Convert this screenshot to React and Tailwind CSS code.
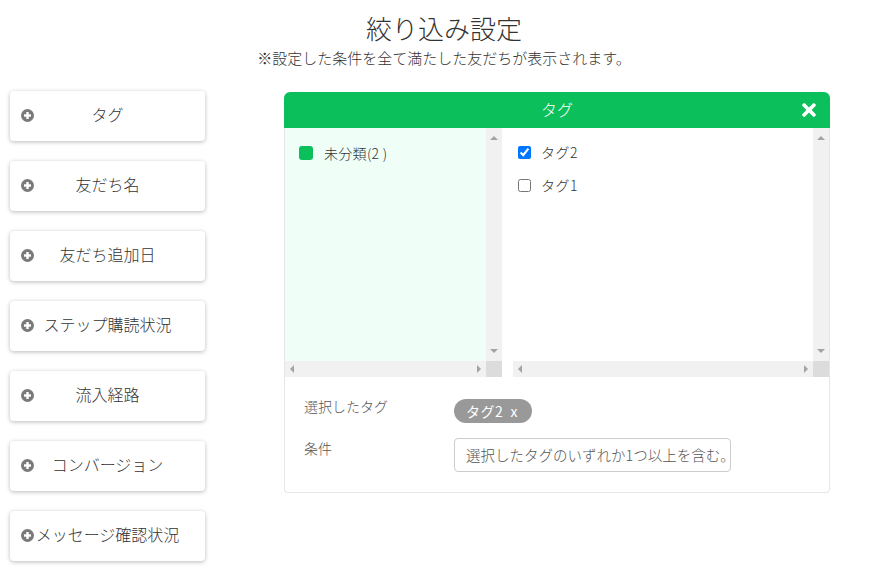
import React from "react";
import { FaTimes } from "react-icons/fa";

const font = { fontFamily: '"Noto Sans CJK JP", "Noto Sans", sans-serif' };

function PlusIcon() {
  return (
    <svg width="13" height="13" viewBox="0 0 13 13">
      <circle cx="6.5" cy="6.5" r="6.5" fill="#7a7a7a" />
      <rect x="3" y="5.3" width="7" height="2.4" fill="#fff" />
      <rect x="5.3" y="3" width="2.4" height="7" fill="#fff" />
    </svg>
  );
}

function SideButton({ label }) {
  return (
    <div className="relative h-[50px] w-[195px] rounded-[4px] bg-white shadow-[0_1px_4px_rgba(0,0,0,0.28)] flex items-center justify-center">
      <span className="absolute left-[11px] top-[18px] flex">
        <PlusIcon />
      </span>
      <span className="text-[16px] leading-[22px] font-light text-[#333] whitespace-nowrap pb-[5px]">{label}</span>
    </div>
  );
}

function UpArrow() {
  return <div className="w-0 h-0 border-l-[4px] border-r-[4px] border-b-[4px] border-l-transparent border-r-transparent border-b-[#a3a3a3]" />;
}
function DownArrow() {
  return <div className="w-0 h-0 border-l-[4px] border-r-[4px] border-t-[4px] border-l-transparent border-r-transparent border-t-[#a3a3a3]" />;
}
function LeftArrow() {
  return <div className="w-0 h-0 border-t-[4px] border-b-[4px] border-r-[4px] border-t-transparent border-b-transparent border-r-[#a3a3a3]" />;
}
function RightArrow() {
  return <div className="w-0 h-0 border-t-[4px] border-b-[4px] border-l-[4px] border-t-transparent border-b-transparent border-l-[#a3a3a3]" />;
}

function VScroll() {
  return (
    <div className="w-[16px] bg-[#f1f1f1] flex flex-col items-center justify-between pt-[8px] pb-[8px]">
      <UpArrow />
      <DownArrow />
    </div>
  );
}

function HScroll() {
  return (
    <div className="h-[16px] flex">
      <div className="flex-1 bg-[#f1f1f1] flex items-center justify-between px-[5px]">
        <LeftArrow />
        <RightArrow />
      </div>
      <div className="w-[16px] bg-[#dcdcdc]" />
    </div>
  );
}

export default function App() {
  const items = ["タグ", "友だち名", "友だち追加日", "ステップ購読状況", "流入経路", "コンバージョン", "メッセージ確認状況"];
  return (
    <div className="w-[888px] h-[572px] bg-white overflow-hidden text-[#333] font-light" style={font}>
      <div className="pt-[8px] flex flex-col items-center">
        <div className="text-[26px] leading-[39px] font-light text-[#333]">絞り込み設定</div>
        <div className="text-[15px] leading-[22px] text-[#333]">※設定した条件を全て満たした友だちが表示されます。</div>
      </div>
      <div className="mt-[22px] flex pl-[10px]">
        <div className="flex flex-col gap-[20px]">
          {items.map((t) => (
            <SideButton key={t} label={t} />
          ))}
        </div>
        <div className="ml-[79px] mt-[1px] w-[546px] self-start">
          <div className="h-[36px] rounded-t-[6px] bg-[#0bbf5a] grid grid-cols-[1fr_auto_1fr] items-center">
            <div />
            <div className="text-white text-[16px] leading-[22px] pb-[3px]">タグ</div>
            <div className="flex justify-end pr-[11px]">
              <FaTimes className="text-white" size={20} />
            </div>
          </div>
          <div className="border border-t-0 border-[#e6e6e6] rounded-b-[4px]">
            <div className="flex gap-[11px]">
              <div className="w-[217px] flex flex-col">
                <div className="h-[233px] flex">
                  <div className="flex-1 bg-[#effff8] pt-[15px] pl-[14px]">
                    <div className="flex items-center h-[20px] gap-[11px]">
                      <div className="w-[14px] h-[14px] rounded-[3px] bg-[#0bbf5a]" />
                      <span className="text-[14px] leading-[20px] tracking-[0.3px]">未分類(2 )</span>
                    </div>
                  </div>
                  <VScroll />
                </div>
                <HScroll />
              </div>
              <div className="flex-1 flex flex-col">
                <div className="h-[233px] flex">
                  <div className="flex-1 bg-white pt-[14px] pl-[5px] flex flex-col gap-[13px]">
                    <label className="flex items-center h-[20px] gap-[10px]">
                      <input type="checkbox" defaultChecked className="m-0 w-[13px] h-[13px]" />
                      <span className="text-[14px] leading-[20px] tracking-[0.5px]">タグ2</span>
                    </label>
                    <label className="flex items-center h-[20px] gap-[10px]">
                      <input type="checkbox" className="m-0 w-[13px] h-[13px]" />
                      <span className="text-[14px] leading-[20px] tracking-[0.5px]">タグ1</span>
                    </label>
                  </div>
                  <VScroll />
                </div>
                <HScroll />
              </div>
            </div>
            <div className="grid grid-cols-[150px_1fr] gap-y-[15px] pl-[19px] pt-[21px] pb-[20px]">
              <div className="text-[14px] leading-[20px] text-[#555] -mt-[2px]">選択したタグ</div>
              <div>
                <span className="inline-flex items-center h-[24px] rounded-full bg-[#999] pl-[12px] pr-[14px] text-white text-[14px] leading-[20px] font-normal tracking-[0.5px]">
                  タグ2&nbsp;&nbsp;x
                </span>
              </div>
              <div className="text-[14px] leading-[20px] text-[#555]">条件</div>
              <div className="w-[277px] h-[34px] border border-[#ccc] rounded-[4px] pl-[11px] flex items-center overflow-hidden whitespace-nowrap text-[14.5px] text-[#555]">
                選択したタグのいずれか1つ以上を含む。
              </div>
            </div>
          </div>
        </div>
      </div>
    </div>
  );
}
